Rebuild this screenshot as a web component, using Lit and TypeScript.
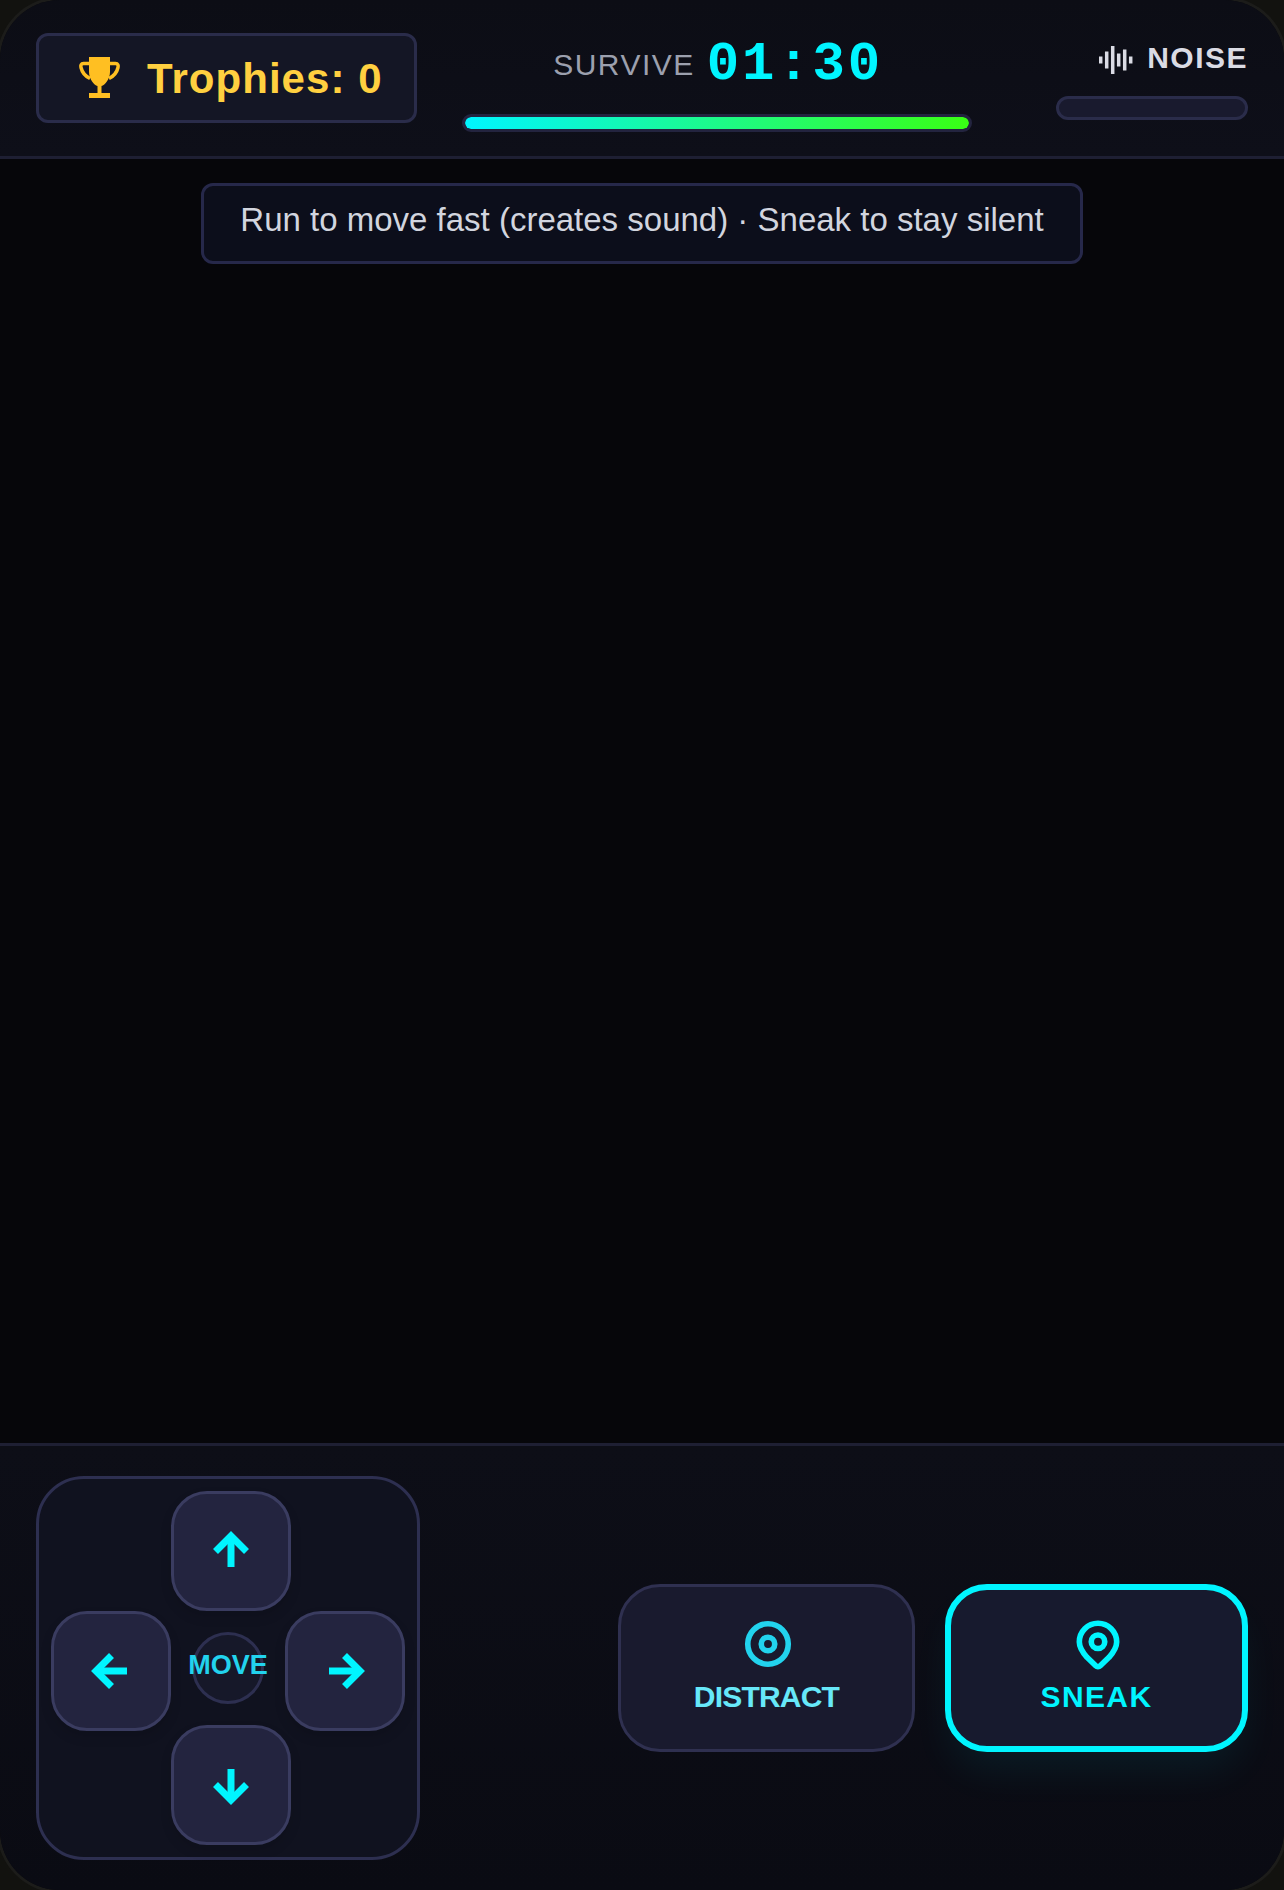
import { LitElement, html, css, svg } from 'lit';
import { customElement } from 'lit/decorators.js';

const arrow = (rotate: number) => html`<svg class="arrow" width="40" height="40" viewBox="0 0 40 40">
  <g transform="rotate(${rotate} 20 20)" fill="none" stroke="#00f5ff" stroke-width="7" stroke-linejoin="miter">
    ${svg`<path d="M20 36V5"/><path d="M4.5 20.5L20 5l15.500 15.500"/>`}
  </g>
</svg>`;

const noiseBars = [
  [1.7, 7], [7.700, 17], [13.7, 28], [19.7, 13], [25.7, 21], [31.7, 7],
];

@customElement('app-root')
export class AppRoot extends LitElement {
  static styles = css`
    :host {
      display: block;
      width: 1284px;
      height: 1890px;
      background: #12120f;
      font-family: 'Liberation Sans', Arial, sans-serif;
    }
    .frame {
      display: flex;
      flex-direction: column;
      height: 100%;
      box-sizing: border-box;
      border-radius: 60px;
      overflow: hidden;
      background: #06060a;
      box-shadow: 0 0 0 3px #1c1c1a;
    }
    .top {
      display: flex;
      align-items: flex-start;
      height: 159px;
      flex: none;
      box-sizing: border-box;
      padding: 33px 36px 0;
      background: linear-gradient(#0c0d15, #0e0f19);
      border-bottom: 3px solid #1e1f33;
    }
    .trophies {
      display: flex;
      align-items: center;
      gap: 24px;
      width: 381px;
      height: 90px;
      box-sizing: border-box;
      padding: 0 0 0 36px;
      background: #141625;
      border: 3px solid #2a2c4a;
      border-radius: 12px;
      color: #ffd040;
      font-size: 42px;
      font-weight: 700;
      letter-spacing: 1.05px;
      white-space: nowrap;
    }
    .trophies svg {
      flex: none;
    }
    .trophies span {
      padding-top: 2px;
    }
    .survive {
      flex: 1;
      margin: 1px 84px 0 45px;
      display: flex;
      flex-direction: column;
      align-items: center;
    }
    .clock {
      display: flex;
      align-items: center;
      justify-content: center;
      gap: 12px;
      margin-bottom: 19px;
      padding-left: 2px;
      color: #9ca0ae;
      font-size: 30px;
      letter-spacing: 1.5px;
    }
    .time {
      color: #00f5ff;
      font-family: 'Liberation Mono', monospace;
      font-size: 54px;
      font-weight: 700;
      letter-spacing: 2.8px;
    }
    .bar {
      width: 100%;
      height: 18px;
      box-sizing: border-box;
      border: 3px solid #23243f;
      border-radius: 9px;
      overflow: hidden;
      background: #191a2e;
    }
    .bar-fill {
      height: 100%;
      border-radius: 6px;
      background: linear-gradient(90deg, #00f5ff, #39ff14);
    }
    .noise {
      width: 192px;
      flex: none;
      display: flex;
      flex-direction: column;
      align-items: flex-end;
      color: #dadbe4;
      font-size: 30px;
      font-weight: 700;
      letter-spacing: 1.5px;
    }
    .noise-label {
      display: flex;
      align-items: center;
      gap: 12px;
      height: 28px;
      margin-top: 12px;
    }
    .noise-label svg {
      margin-top: 2px;
    }
    .noise-label span {
      margin-top: -2px;
    }
    .noise-meter {
      width: 192px;
      height: 24px;
      box-sizing: border-box;
      margin-top: 23px;
      background: #191a2e;
      border: 3px solid #2a2c4a;
      border-radius: 12px;
    }
    .stage {
      flex: 1;
      display: flex;
      flex-direction: column;
      align-items: center;
      padding-top: 24px;
    }
    .hint {
      padding: 15px 36px 0;
      height: 81px;
      box-sizing: border-box;
      background: #0c0e1b;
      border: 3px solid #26284a;
      border-radius: 12px;
      color: #d2d5df;
      font-size: 33px;
      line-height: 38px;
      white-space: nowrap;
    }
    .controls {
      display: flex;
      align-items: center;
      justify-content: space-between;
      height: 447px;
      flex: none;
      box-sizing: border-box;
      padding: 27px 36px 28px;
      background: linear-gradient(#0d0e17, #0a0b13);
      border-top: 3px solid #1e1f33;
    }
    .dpad {
      display: grid;
      grid-template-columns: 120px 114px 120px;
      grid-template-rows: 120px 114px 120px;
      width: 384px;
      height: 384px;
      box-sizing: border-box;
      padding: 12px;
      background: #10121f;
      border: 3px solid #2d2f50;
      border-radius: 48px;
    }
    .pad {
      display: flex;
      align-items: center;
      justify-content: center;
      width: 120px;
      height: 120px;
      box-sizing: border-box;
      background: #23243f;
      border: 3px solid #3a3c60;
      border-radius: 36px;
      box-shadow: 0 6px 12px rgba(0, 0, 0, 0.12);
    }
    .up { grid-column: 2; grid-row: 1; }
    .left { grid-column: 1; grid-row: 2; }
    .right { grid-column: 3; grid-row: 2; }
    .down { grid-column: 2; grid-row: 3; }
    .hub {
      grid-column: 2;
      grid-row: 2;
      place-self: center;
      display: flex;
      align-items: center;
      justify-content: center;
      width: 72px;
      height: 72px;
      box-sizing: border-box;
      background: #161829;
      border: 3px solid #2d2f50;
      border-radius: 50%;
      color: #22d3ee;
      font-size: 27px;
      font-weight: 700;
      white-space: nowrap;
      padding-bottom: 4px;
    }
    .arrow {
      display: block;
    }
    .actions {
      display: flex;
      gap: 30px;
    }
    .action {
      display: flex;
      flex-direction: column;
      align-items: center;
      height: 168px;
      box-sizing: border-box;
      font-size: 30px;
      font-weight: 700;
    }
    .action svg {
      display: block;
      margin: 0 0 9px 2px;
    }
    .distract {
      width: 297px;
      padding-top: 30px;
      background: #191a2e;
      border: 3px solid #2f3050;
      border-radius: 42px;
      color: #67e8f9;
      letter-spacing: -0.8px;
    }
    .sneak {
      width: 303px;
      padding-top: 27px;
      background: #171a2e;
      border: 6px solid #00f5ff;
      border-radius: 42px;
      color: #00f5ff;
      letter-spacing: 1.4px;
      box-shadow: 0 24px 42px -6px rgba(0, 245, 255, 0.07);
    }
  `;

  render() {
    return html`<div class="frame">
      <header class="top">
        <div class="trophies">
          <svg width="48" height="48" viewBox="0 0 48 48" fill="#ffbf22">
            <path d="M14 3H35V18C35 25 30 31 26.500 32V39H35V44H14V39H22.500V32C19 31 14 25 14 18Z"/>
            <g fill="none" stroke="#ffbf22" stroke-width="3.500">
              <path d="M15 9.500H8.500C6 9.500 5.500 11.500 6 13.500C7 18 10 22 15 24.500"/>
              <path d="M34 9.500H40.500C43 9.500 43.500 11.500 43 13.500C42 18 39 22 34 24.500"/>
            </g>
          </svg>
          <span>Trophies: 0</span>
        </div>
        <div class="survive">
          <div class="clock">
            <span>SURVIVE</span>
            <span class="time">01:30</span>
          </div>
          <div class="bar"><div class="bar-fill"></div></div>
        </div>
        <div class="noise">
          <div class="noise-label">
            <svg width="36" height="28" viewBox="0 0 36 28" stroke="#dadbe4" stroke-width="3.500">
              ${noiseBars.map(([x, h]) => svg`<line x1=${x} x2=${x} y1=${14 - h / 2} y2=${14 + h / 2}></line>`)}
            </svg>
            <span>NOISE</span>
          </div>
          <div class="noise-meter"></div>
        </div>
      </header>

      <main class="stage">
        <div class="hint">Run to move fast (creates sound) · Sneak to stay silent</div>
      </main>

      <footer class="controls">
        <div class="dpad">
          <div class="pad up">${arrow(0)}</div>
          <div class="pad left">${arrow(-90)}</div>
          <div class="hub">MOVE</div>
          <div class="pad right">${arrow(90)}</div>
          <div class="pad down">${arrow(180)}</div>
        </div>
        <div class="actions">
          <div class="action distract">
            <svg width="54" height="54" viewBox="0 0 24 24" fill="none" stroke="#22d3ee" stroke-width="2.500">
              <circle cx="12" cy="12" r="9"></circle>
              <circle cx="12" cy="12" r="3"></circle>
            </svg>
            <span>DISTRACT</span>
          </div>
          <div class="action sneak">
            <svg width="54" height="54" viewBox="0 0 24 24" fill="none" stroke="#00f5ff" stroke-width="2.500" stroke-linejoin="round">
              <path d="M12 2.800a8.300 8.300 0 0 1 8.300 8.300c0 2.800-1.800 5-3.400 6.800l-3.900 3.800a1.400 1.400 0 0 1-2 0l-3.900-3.800C5.500 16.100 3.700 13.900 3.700 11.100A8.300 8.300 0 0 1 12 2.800z"></path>
              <circle cx="12" cy="11" r="3"></circle>
            </svg>
            <span>SNEAK</span>
          </div>
        </div>
      </footer>
    </div>`;
  }
}
